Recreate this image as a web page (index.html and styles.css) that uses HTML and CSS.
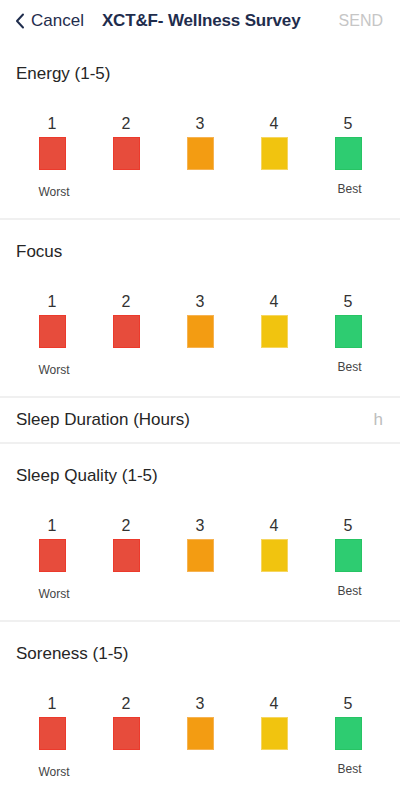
FILE: index.html
```html
<!DOCTYPE html>
<html lang="en">
<head>
<meta charset="utf-8">
<title>XCT&amp;F- Wellness Survey</title>
<link rel="stylesheet" href="styles.css">
</head>
<body>
<div class="app">
  <header class="topbar">
    <a class="back">
      <svg class="chev" width="10" height="16" viewBox="0 0 10 16"><path d="M8 1.5 L2 8 L8 14.5" fill="none" stroke="#1f2d4d" stroke-width="2" stroke-linecap="round" stroke-linejoin="round"/></svg>
      <span>Cancel</span>
    </a>
    <h1 class="title">XCT&amp;F- Wellness Survey</h1>
    <span class="send">SEND</span>
  </header>

  <section class="scale">
    <div class="q">Energy (1-5)</div>
    <div class="row">
      <div class="col"><div class="num">1</div><div class="sq red"></div><div class="lbl worst">Worst</div></div>
      <div class="col"><div class="num">2</div><div class="sq red"></div></div>
      <div class="col"><div class="num">3</div><div class="sq orange"></div></div>
      <div class="col"><div class="num">4</div><div class="sq yellow"></div></div>
      <div class="col"><div class="num">5</div><div class="sq green"></div><div class="lbl best">Best</div></div>
    </div>
  </section>

  <section class="scale">
    <div class="q">Focus</div>
    <div class="row">
      <div class="col"><div class="num">1</div><div class="sq red"></div><div class="lbl worst">Worst</div></div>
      <div class="col"><div class="num">2</div><div class="sq red"></div></div>
      <div class="col"><div class="num">3</div><div class="sq orange"></div></div>
      <div class="col"><div class="num">4</div><div class="sq yellow"></div></div>
      <div class="col"><div class="num">5</div><div class="sq green"></div><div class="lbl best">Best</div></div>
    </div>
  </section>

  <section class="field">
    <span class="flabel">Sleep Duration (Hours)</span>
    <span class="unit">h</span>
  </section>

  <section class="scale">
    <div class="q">Sleep Quality (1-5)</div>
    <div class="row">
      <div class="col"><div class="num">1</div><div class="sq red"></div><div class="lbl worst">Worst</div></div>
      <div class="col"><div class="num">2</div><div class="sq red"></div></div>
      <div class="col"><div class="num">3</div><div class="sq orange"></div></div>
      <div class="col"><div class="num">4</div><div class="sq yellow"></div></div>
      <div class="col"><div class="num">5</div><div class="sq green"></div><div class="lbl best">Best</div></div>
    </div>
  </section>

  <section class="scale">
    <div class="q">Soreness (1-5)</div>
    <div class="row">
      <div class="col"><div class="num">1</div><div class="sq red"></div><div class="lbl worst">Worst</div></div>
      <div class="col"><div class="num">2</div><div class="sq red"></div></div>
      <div class="col"><div class="num">3</div><div class="sq orange"></div></div>
      <div class="col"><div class="num">4</div><div class="sq yellow"></div></div>
      <div class="col"><div class="num">5</div><div class="sq green"></div><div class="lbl best">Best</div></div>
    </div>
  </section>
</div>
</body>
</html>
```

FILE: styles.css
```css
* { box-sizing: border-box; }
html, body { margin: 0; padding: 0; background: #fff; }
body {
  font-family: "Liberation Sans", Arial, sans-serif;
  color: #2a2a2a;
  overflow: hidden;
}
.app { width: 400px; }

.topbar {
  height: 42px;
  display: flex;
  align-items: center;
  padding: 0 17px 0 15px;
}
.back {
  display: flex;
  align-items: center;
  color: #1f2d4d;
  font-size: 17px;
}
.chev { margin-right: 6px; }
.title {
  margin: 0 0 0 18px;
  font-size: 17px;
  font-weight: bold;
  color: #1f2d4d;
  letter-spacing: -0.15px;
}
.send {
  margin-left: auto;
  font-size: 16px;
  color: #c6c6c6;
}

.scale {
  padding: 22px 15px 18px;
  border-bottom: 2px solid #f0f0f0;
}
.q {
  font-size: 17px;
  line-height: 20px;
  padding-left: 1px;
  color: #262626;
}
.row {
  display: grid;
  grid-template-columns: repeat(5, 74px);
  margin-top: 30px;
  height: 86px;
}
.col {
  display: flex;
  flex-direction: column;
  align-items: center;
}
.num {
  font-size: 16px;
  line-height: 20px;
  color: #333;
  margin-bottom: 3px;
}
.sq {
  width: 27px;
  height: 33px;
  border: 1px solid;
}
.red { background: #e74c3c; border-color: #ec3a2c; }
.orange { background: #f39c12; border-color: #f6b352; }
.yellow { background: #f1c40f; border-color: #f6d660; }
.green { background: #2ecc71; border-color: #27c464; }

.lbl {
  width: 27px;
  font-size: 12px;
  line-height: 16px;
  color: #444;
  white-space: nowrap;
}
.worst { margin-top: 14px; text-align: left; }
.best { margin-top: 11px; text-align: right; display: flex; justify-content: flex-end; }

.field {
  height: 46px;
  display: flex;
  align-items: center;
  padding: 0 17px 0 16px;
  border-bottom: 2px solid #f0f0f0;
  font-size: 17px;
}
.flabel { color: #262626; }
.unit { margin-left: auto; color: #bdbdbd; }
```
